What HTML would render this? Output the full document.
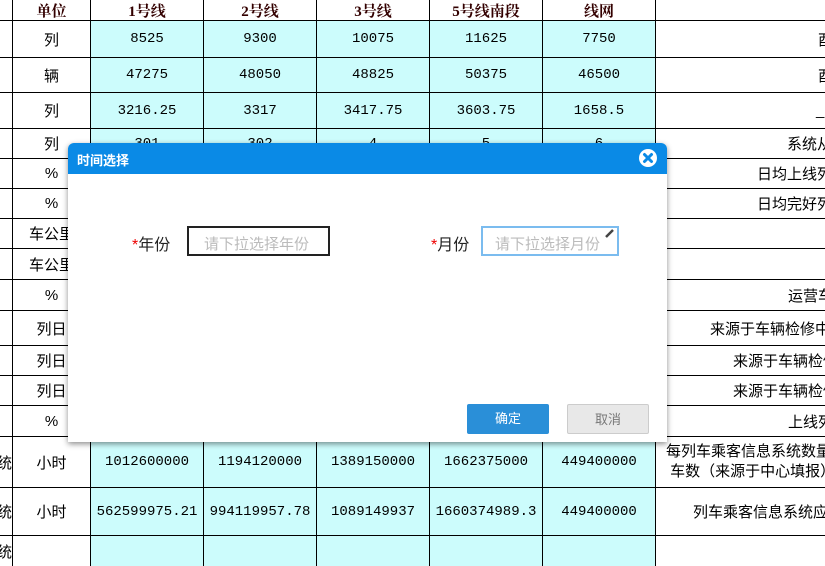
<!DOCTYPE html>
<html><head><meta charset="utf-8"><style>
*{margin:0;padding:0;box-sizing:border-box}
body{width:825px;height:552px;overflow:hidden;background:#fff;font-family:"Liberation Sans","Noto Sans CJK SC",sans-serif;position:relative}
.g{position:absolute;left:0;top:0;display:grid;grid-template-columns:12px 77px 112px 112px 112px 112px 112px 200px;grid-template-rows:20px 36px 34px 35px 29px 29px 29px 29px 30px 30px 34px 29px 29px 30px 50px 47px 30px;gap:1px;background:#000;width:900px}
.g div{background:#fff;display:flex;align-items:center;justify-content:center;font-size:14px;font-family:"Liberation Mono","Noto Sans CJK SC",monospace;white-space:nowrap;overflow:hidden}
.g div.c{background:#ccfcfc}
.g div.h{font-size:15px;font-weight:bold;color:#300;font-family:"Liberation Serif","Noto Serif CJK SC",serif}
.g div.u{font-family:"Liberation Sans","Noto Sans CJK SC",sans-serif;font-size:15px}
.g div.r{justify-content:flex-start;font-family:"Liberation Sans","Noto Sans CJK SC",sans-serif;font-size:15px}
.dlg{position:absolute;left:68px;top:143px;width:599px;height:299px;background:#fff;border-radius:6px 6px 0 0;box-shadow:0 2px 6px rgba(0,0,0,.45)}
.hd{height:31px;background:#0a8ae6;border-radius:6px 6px 0 0;color:#fff;font-weight:bold;font-size:13px;padding:7px 0 0 9px}
.x{position:absolute;right:9px;top:5px;width:20px;height:20px}
.lab{position:absolute;font-size:16px;color:#222}
.lab b{color:#e00;font-weight:normal}
.in{position:absolute;height:30px;font-size:15px;color:#bbb;padding:5px 0 0 15px;white-space:nowrap;overflow:hidden}
.btn{position:absolute;top:261px;width:82px;height:30px;font-size:13px;text-align:center;line-height:30px;border-radius:2px}
</style></head><body>
<div class="g">
<div></div><div class="h">单位</div><div class="h">1号线</div><div class="h">2号线</div><div class="h">3号线</div><div class="h">5号线南段</div><div class="h">线网</div><div></div>
<div></div><div class="u">列</div><div class="c">8525</div><div class="c">9300</div><div class="c">10075</div><div class="c">11625</div><div class="c">7750</div><div class="r" style="padding-left:162px">酉</div>
<div></div><div class="u">辆</div><div class="c">47275</div><div class="c">48050</div><div class="c">48825</div><div class="c">50375</div><div class="c">46500</div><div class="r" style="padding-left:162px">酉</div>
<div></div><div class="u">列</div><div class="c">3216.25</div><div class="c">3317</div><div class="c">3417.75</div><div class="c">3603.75</div><div class="c">1658.5</div><div class="r" style="padding-left:160px">_</div>
<div></div><div class="u">列</div><div class="c">301</div><div class="c">302</div><div class="c">4</div><div class="c">5</div><div class="c">6</div><div class="r" style="padding-left:131px">系统从</div>
<div></div><div class="u">%</div><div class="c"></div><div class="c"></div><div class="c"></div><div class="c"></div><div class="c"></div><div class="r" style="padding-left:101px">日均上线列</div>
<div></div><div class="u">%</div><div class="c"></div><div class="c"></div><div class="c"></div><div class="c"></div><div class="c"></div><div class="r" style="padding-left:101px">日均完好列</div>
<div></div><div class="u">车公里</div><div class="c"></div><div class="c"></div><div class="c"></div><div class="c"></div><div class="c"></div><div></div>
<div></div><div class="u">车公里</div><div class="c"></div><div class="c"></div><div class="c"></div><div class="c"></div><div class="c"></div><div></div>
<div></div><div class="u">%</div><div class="c"></div><div class="c"></div><div class="c"></div><div class="c"></div><div class="c"></div><div class="r" style="padding-left:132px">运营车</div>
<div></div><div class="u">列日</div><div class="c"></div><div class="c"></div><div class="c"></div><div class="c"></div><div class="c"></div><div class="r" style="padding-left:54px">来源于车辆检修中</div>
<div></div><div class="u">列日</div><div class="c"></div><div class="c"></div><div class="c"></div><div class="c"></div><div class="c"></div><div class="r" style="padding-left:77px">来源于车辆检修</div>
<div></div><div class="u">列日</div><div class="c"></div><div class="c"></div><div class="c"></div><div class="c"></div><div class="c"></div><div class="r" style="padding-left:77px">来源于车辆检修</div>
<div></div><div class="u">%</div><div class="c"></div><div class="c"></div><div class="c"></div><div class="c"></div><div class="c"></div><div class="r" style="padding-left:132px">上线列</div>
<div class="r" style="justify-content:flex-end">统</div><div class="u">小时</div><div class="c">1012600000</div><div class="c">1194120000</div><div class="c">1389150000</div><div class="c">1662375000</div><div class="c">449400000</div><div class="r" style="padding-left:10px;line-height:20px;align-items:center">每列车乘客信息系统数量<br>&nbsp;车数（来源于中心填报）</div>
<div class="r" style="justify-content:flex-end">统</div><div class="u">小时</div><div class="c">562599975.21</div><div class="c">994119957.78</div><div class="c">1089149937</div><div class="c">1660374989.3</div><div class="c">449400000</div><div class="r" style="padding-left:37px">列车乘客信息系统应</div>
<div class="r" style="justify-content:flex-end">统</div><div class="u"></div><div class="c"></div><div class="c"></div><div class="c"></div><div class="c"></div><div class="c"></div><div></div>
</div>
<div class="dlg">
<div class="hd">时间选择</div>
<div class="x"><svg width="20" height="20" viewBox="0 0 20 20"><circle cx="10" cy="10" r="9" fill="#fff"/><path d="M6.5 6.5L13.5 13.5M13.5 6.5L6.5 13.5" stroke="#0a8ae6" stroke-width="3" stroke-linecap="round"/></svg></div>
<div class="lab" style="left:64px;top:88px"><b>*</b>年份</div>
<div class="in" style="left:119px;top:83px;width:143px;border:2px solid #222">请下拉选择年份</div>
<div class="lab" style="left:363px;top:88px"><b>*</b>月份</div>
<div class="in" style="left:413px;top:83px;width:138px;border:2px solid #7bbcef;padding-left:12px">请下拉选择月份</div>
<svg style="position:absolute;left:536px;top:84px" width="12" height="12"><path d="M2 10L9 3" stroke="#444" stroke-width="2.5"/></svg>
<div class="btn" style="left:399px;background:#2a8fd8;color:#fff">确定</div>
<div class="btn" style="left:499px;background:#e8e8e8;color:#777;border:1px solid #ccc">取消</div>
</div>
</body></html>
